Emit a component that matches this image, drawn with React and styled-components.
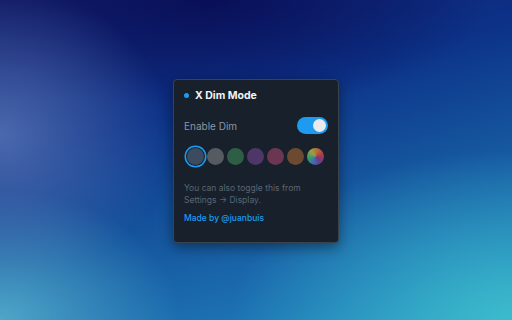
import styled, { createGlobalStyle } from "styled-components"
import { useState } from "react"

const swatches = [
    "#3b4b60",
    "#565b62",
    "#2f5e47",
    "#4f3668",
    "#6b3652",
    "#6b4a31",
    "rainbow"
]

export default function App() {
    const [enabled, setEnabled] = useState(true)
    const [selected, setSelected] = useState(0)

    return (
        <>
            <Global />
            <Desktop>
                <Card>
                    <Header>
                        <Dot />
                        <Title>X Dim Mode</Title>
                    </Header>
                    <Row>
                        <Label>Enable Dim</Label>
                        <Toggle $on={enabled} onClick={() => setEnabled(!enabled)}>
                            <Knob />
                        </Toggle>
                    </Row>
                    <Swatches>
                        {swatches.map((color, i) => (
                            <Swatch
                                key={i}
                                $color={color}
                                $active={i === selected}
                                onClick={() => setSelected(i)}
                            />
                        ))}
                    </Swatches>
                    <Hint>
                        You can also toggle this from
                        <br />
                        Settings → Display.
                    </Hint>
                    <Credit>Made by @juanbuis</Credit>
                </Card>
            </Desktop>
        </>
    )
}

const Global = createGlobalStyle`
    html, body {
        margin: 0;
        padding: 0;
    }
    body {
        font-family: Inter, "Noto Sans", sans-serif;
    }
`
const Desktop = styled.div`
    width: 512px;
    height: 320px;
    display: flex;
    align-items: center;
    justify-content: center;
    overflow: hidden;
    background:
        radial-gradient(ellipse 170px 150px at 0px 135px, rgba(96, 124, 186, 0.75), rgba(96, 124, 186, 0)),
        radial-gradient(ellipse 280px 110px at 210px 0px, rgba(8, 12, 84, 0.85), rgba(8, 12, 84, 0)),
        radial-gradient(ellipse 180px 130px at 0px 320px, rgba(88, 178, 206, 0.85), rgba(88, 178, 206, 0)),
        radial-gradient(ellipse 280px 170px at 512px 320px, rgba(62, 192, 206, 0.9), rgba(62, 192, 206, 0)),
        linear-gradient(165deg, #121c68 0%, #0c3288 35%, #15559e 60%, #1d74b4 85%, #2890c0 100%);
`
const Card = styled.div`
    box-sizing: border-box;
    width: 166px;
    height: 164px;
    margin-top: 1px;
    padding: 9px 10px 0 10px;
    background-color: #17202b;
    border: 1px solid #3a424c;
    border-radius: 4px;
    box-shadow: 0 4px 14px rgba(0, 0, 0, 0.45);
    display: flex;
    flex-direction: column;
`
const Header = styled.div`
    display: flex;
    align-items: center;
    gap: 6px;
    height: 14px;
`
const Dot = styled.span`
    width: 5px;
    height: 5px;
    border-radius: 50%;
    background-color: #1d9bf0;
`
const Title = styled.p`
    margin: 0;
    font-size: 10.5px;
    font-weight: 700;
    color: #f2f4f6;
`
const Row = styled.div`
    display: flex;
    align-items: center;
    justify-content: space-between;
    margin-top: 14px;
    height: 18px;
`
const Label = styled.p`
    margin: 0;
    font-size: 10px;
    color: #8b96a2;
`
const Toggle = styled.button`
    width: 31px;
    height: 17px;
    padding: 2px;
    border: none;
    border-radius: 9px;
    background-color: ${p => (p.$on ? "#1d9bf0" : "#3a424c")};
    display: flex;
    justify-content: ${p => (p.$on ? "flex-end" : "flex-start")};
    align-items: center;
    cursor: pointer;
`
const Knob = styled.span`
    width: 13px;
    height: 13px;
    border-radius: 50%;
    background-color: #e8eaed;
`
const Swatches = styled.div`
    display: flex;
    gap: 3px;
    margin-top: 13px;
    padding-left: 2.5px;
`
const Swatch = styled.button`
    width: 17px;
    height: 17px;
    padding: 0;
    border: none;
    border-radius: 50%;
    cursor: pointer;
    background: ${p =>
        p.$color === "rainbow"
            ? "conic-gradient(from 200deg, #3d6cb0, #3b9a6a, #9aa046, #b5683a, #a8384e, #6a3a8c, #3d6cb0)"
            : p.$color};
    box-shadow: ${p => (p.$active ? "0 0 0 1px #17202b, 0 0 0 2.5px #1d9bf0" : "none")};
`
const Hint = styled.p`
    margin: 17px 0 0 0;
    font-size: 8.5px;
    line-height: 12px;
    color: #5b6672;
`
const Credit = styled.p`
    margin: 7px 0 0 0;
    font-size: 8.5px;
    font-weight: 500;
    color: #1d9bf0;
`
